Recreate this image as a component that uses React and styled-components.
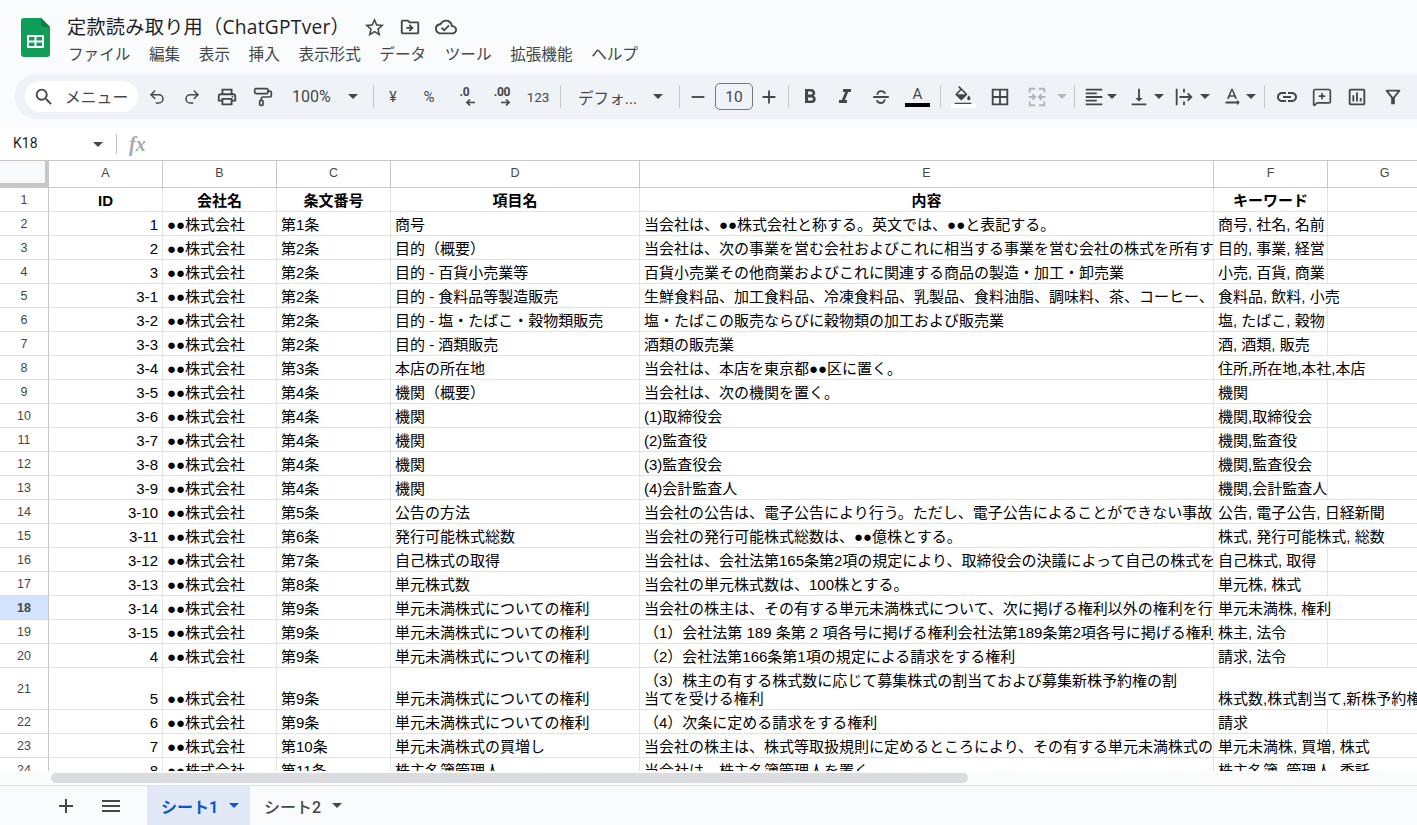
import React from "react";
import styled, { createGlobalStyle } from "styled-components";
import { MessageSquarePlus, PaintRoller, Redo2, Undo2 } from "lucide-react";
import {
  MdAdd,
  MdFormatAlignLeft,
  MdFormatBold,
  MdFormatColorFill,
  MdFormatItalic,
  MdLink,
  MdMenu,
  MdOutlineBorderAll,
  MdOutlineCloudDone,
  MdOutlineDriveFileMove,
  MdOutlineFilterAlt,
  MdOutlineInsertChart,
  MdOutlinePrint,
  MdRemove,
  MdSearch,
  MdStarBorder,
  MdTextRotationNone,
  MdVerticalAlignBottom,
} from "react-icons/md";

const UI_FONT = `Roboto, "Noto Sans CJK JP", sans-serif`;
const SHEET_FONT = `"Liberation Sans", "Noto Sans CJK JP", sans-serif`;
const ICON = "#444746";

const GlobalStyle = createGlobalStyle`
  html, body {
    margin: 0;
    padding: 0;
    overflow: hidden;
    background: #f9fbfd;
  }
`;

const Page = styled.div`
  width: 1417px;
  height: 825px;
  display: flex;
  flex-direction: column;
  overflow: hidden;
  background: #f9fbfd;
  color: #1f1f1f;
  font-family: ${UI_FONT};
`;

const Header = styled.header`
  height: 74px;
  flex: none;
  display: flex;
  padding-left: 21px;
  box-sizing: border-box;
`;

const LogoWrap = styled.div`
  width: 29px;
  padding-top: 18px;
  margin-right: 17px;
`;

const HeaderMain = styled.div`
  display: flex;
  flex-direction: column;
`;

const TitleRow = styled.div`
  display: flex;
  align-items: center;
  height: 28px;
  margin-top: 13px;
`;

const Title = styled.div`
  font-family: "Open Sans", "Noto Sans CJK JP", sans-serif;
  font-size: 19.2px;
  letter-spacing: 0.25px;
  line-height: 28px;
  width: 289px;
  white-space: nowrap;
`;

const TitleIcon = styled.span`
  width: 36px;
  display: flex;
  justify-content: center;
  color: ${ICON};
  font-size: ${(p) => p.$size || 22}px;
`;

const MenuBar = styled.nav`
  display: flex;
  gap: 18.6px;
  margin-top: 2px;
  padding-left: 1px;
  font-size: 15.6px;
  line-height: 24px;
  color: #444746;
`;

const Toolbar = styled.div`
  height: 45px;
  flex: none;
  margin-left: 15px;
  padding-left: 10px;
  display: flex;
  align-items: center;
  background: #eff3f8;
  border-radius: 23px 0 0 23px;
  color: ${ICON};
`;

const SearchPill = styled.div`
  width: 113px;
  height: 31px;
  flex: none;
  margin-right: 1px;
  box-sizing: border-box;
  padding-left: 8px;
  display: flex;
  align-items: center;
  gap: 10px;
  background: #fff;
  border-radius: 16px;
  font-size: 15.8px;
  white-space: nowrap;
  overflow: hidden;
  svg {
    font-size: 22px;
    flex: none;
  }
`;

const Tool = styled.div`
  width: ${(p) => p.$w || 35}px;
  flex: none;
  height: 30px;
  display: flex;
  align-items: center;
  justify-content: ${(p) => (p.$pad !== undefined ? "flex-start" : "center")};
  padding-left: ${(p) => p.$pad || 0}px;
  box-sizing: border-box;
  gap: ${(p) => p.$gap || 0}px;
  font-size: ${(p) => p.$font || 22}px;
  color: ${(p) => p.$color || ICON};
  white-space: nowrap;
`;

const Caret = styled.span`
  flex: none;
  width: 0;
  height: 0;
  border-left: 5px solid transparent;
  border-right: 5px solid transparent;
  border-top: 5px solid ${(p) => p.$color || ICON};
`;

const Sep = styled.div`
  width: 1px;
  height: 23px;
  flex: none;
  margin: 0 ${(p) => p.$mr}px 0 ${(p) => p.$ml}px;
  background: #c7c7c7;
`;

const SizeBox = styled.div`
  width: 38px;
  height: 27px;
  flex: none;
  box-sizing: border-box;
  border: 1px solid #747775;
  border-radius: 5px;
  display: flex;
  align-items: center;
  justify-content: center;
  font-size: 15.5px;
`;

const ColorStack = styled.div`
  display: flex;
  flex-direction: column;
  align-items: center;
  width: 26px;
`;

const ColorLetter = styled.span`
  font-size: 15px;
  line-height: 17px;
`;

const ColorBar = styled.span`
  width: 25px;
  height: 4px;
  background: ${(p) => p.$color};
  margin-top: ${(p) => p.$mt || 0}px;
`;

const DecStack = styled.div`
  display: flex;
  flex-direction: column;
  align-items: flex-end;
  font-size: 12px;
  font-weight: 700;
  line-height: 11px;
  letter-spacing: -0.3px;
  svg {
    margin-top: 1px;
    margin-right: ${(p) => p.$arrowOut || 0}px;
    display: block;
  }
`;

const FormulaBar = styled.div`
  height: 33px;
  flex: none;
  margin-top: 9px;
  display: flex;
  align-items: center;
  background: #fff;
  border-bottom: 1px solid #c7c7c7;
  box-sizing: border-box;
  padding-left: 13px;
`;

const NameBox = styled.div`
  width: 80px;
  font-size: 14px;
  padding-bottom: 2px;
  color: #1f1f1f;
`;

const FxSep = styled.div`
  width: 1px;
  height: 20px;
  margin: 0 12px 0 13px;
  background: #c7c7c7;
`;

const Fx = styled.span`
  font-family: "Liberation Serif", serif;
  font-style: italic;
  font-weight: 700;
  font-size: 20px;
  color: #a8abad;
`;

const GridArea = styled.div`
  height: 610px;
  flex: none;
  overflow: hidden;
  background: #fff;
`;

const Sheet = styled.table`
  width: 1442px;
  table-layout: fixed;
  border-collapse: separate;
  border-spacing: 0;
  font-family: ${SHEET_FONT};
`;

const ColHead = styled.th`
  height: 27px;
  padding: 0 0 2px;
  box-sizing: border-box;
  background: #fff;
  border-right: 1px solid #c7c7c7;
  border-bottom: 1px solid #c7c7c7;
  font-size: 12.5px;
  font-weight: 400;
  color: #444746;
`;

const Corner = styled.th`
  height: 27px;
  padding: 0;
  box-sizing: border-box;
  background: #f8f9fa;
  border-right: 4px solid #c7c7c7;
  border-bottom: 5px solid #c7c7c7;
`;

const RowHead = styled.td`
  height: ${(p) => p.$h}px;
  padding: 1px 0 0;
  box-sizing: border-box;
  text-align: center;
  background: ${(p) => (p.$active ? "#d3e3fd" : "#fff")};
  border-right: 1px solid #c7c7c7;
  border-bottom: 1px solid #dcdddd;
  font-size: 12.5px;
  font-weight: ${(p) => (p.$active ? 700 : 400)};
  color: #444746;
`;

const Cell = styled.td`
  height: ${(p) => p.$h}px;
  padding: 0 4px 1px;
  box-sizing: border-box;
  vertical-align: bottom;
  overflow: hidden;
  white-space: pre;
  text-align: ${(p) => p.$align || "left"};
  font-size: 15px;
  line-height: 18px;
  font-weight: ${(p) => (p.$bold ? 700 : 400)};
  color: #000;
  border-right: 1px solid #e2e3e3;
  border-bottom: 1px solid #e2e3e3;
`;

const ScrollTrack = styled.div`
  height: 15px;
  flex: none;
  box-sizing: border-box;
  padding: 2px 0 2px 51px;
  background: #fafbfb;
  border-bottom: 1px solid #e1e3e1;
`;

const ScrollThumb = styled.div`
  width: 917px;
  height: 10px;
  background: #dadce0;
  border-radius: 5px;
`;

const TabBar = styled.div`
  height: 39px;
  flex: none;
  display: flex;
  align-items: stretch;
  padding-left: 48px;
  color: ${ICON};
`;

const TabTool = styled.div`
  width: ${(p) => p.$w}px;
  flex: none;
  display: flex;
  align-items: center;
  justify-content: center;
  font-size: 24px;
`;

const Tab = styled.div`
  width: ${(p) => p.$w}px;
  flex: none;
  box-sizing: border-box;
  padding-left: 14px;
  display: flex;
  align-items: center;
  gap: 11px;
  font-size: 16px;
  font-weight: ${(p) => (p.$active ? 700 : 500)};
  color: ${(p) => (p.$active ? "#0b57d0" : "#444746")};
  background: ${(p) => (p.$active ? "#e1e9f7" : "transparent")};
`;

const COMPANY = "●●株式会社";
const UNIT = "単元未満株式についての権利";
const COLUMNS = ["A", "B", "C", "D", "E", "F", "G"];
const WIDTHS = [49, 114, 114, 114, 249, 574, 114, 114];

// id, 条文番号, 項目名, 内容, キーワード, overflow into G
const ROWS = [
  ["1", "第1条", "商号", "当会社は、●●株式会社と称する。英文では、●●と表記する。", "商号, 社名, 名前"],
  ["2", "第2条", "目的（概要）", "当会社は、次の事業を営む会社およびこれに相当する事業を営む会社の株式を所有することにより", "目的, 事業, 経営"],
  ["3", "第2条", "目的 - 百貨小売業等", "百貨小売業その他商業およびこれに関連する商品の製造・加工・卸売業", "小売, 百貨, 商業"],
  ["3-1", "第2条", "目的 - 食料品等製造販売", "生鮮食料品、加工食料品、冷凍食料品、乳製品、食料油脂、調味料、茶、コーヒー、", "食料品, 飲料, 小売", true],
  ["3-2", "第2条", "目的 - 塩・たばこ・穀物類販売", "塩・たばこの販売ならびに穀物類の加工および販売業", "塩, たばこ, 穀物"],
  ["3-3", "第2条", "目的 - 酒類販売", "酒類の販売業", "酒, 酒類, 販売"],
  ["3-4", "第3条", "本店の所在地", "当会社は、本店を東京都●●区に置く。", "住所,所在地,本社,本店", true],
  ["3-5", "第4条", "機関（概要）", "当会社は、次の機関を置く。", "機関"],
  ["3-6", "第4条", "機関", "(1)取締役会", "機関,取締役会"],
  ["3-7", "第4条", "機関", "(2)監査役", "機関,監査役"],
  ["3-8", "第4条", "機関", "(3)監査役会", "機関,監査役会"],
  ["3-9", "第4条", "機関", "(4)会計監査人", "機関,会計監査人"],
  ["3-10", "第5条", "公告の方法", "当会社の公告は、電子公告により行う。ただし、電子公告によることができない事故", "公告, 電子公告, 日経新聞", true],
  ["3-11", "第6条", "発行可能株式総数", "当会社の発行可能株式総数は、●●億株とする。", "株式, 発行可能株式, 総数", true],
  ["3-12", "第7条", "自己株式の取得", "当会社は、会社法第165条第2項の規定により、取締役会の決議によって自己の株式を", "自己株式, 取得"],
  ["3-13", "第8条", "単元株式数", "当会社の単元株式数は、100株とする。", "単元株, 株式"],
  ["3-14", "第9条", UNIT, "当会社の株主は、その有する単元未満株式について、次に掲げる権利以外の権利を行", "単元未満株, 権利", true],
  ["3-15", "第9条", UNIT, "（1）会社法第 189 条第 2 項各号に掲げる権利会社法第189条第2項各号に掲げる権利", "株主, 法令"],
  ["4", "第9条", UNIT, "（2）会社法第166条第1項の規定による請求をする権利", "請求, 法令"],
  ["5", "第9条", UNIT, "（3）株主の有する株式数に応じて募集株式の割当ておよび募集新株予約権の割\n当てを受ける権利", "株式数,株式割当て,新株予約権", true],
  ["6", "第9条", UNIT, "（4）次条に定める請求をする権利", "請求"],
  ["7", "第10条", "単元未満株式の買増し", "当会社の株主は、株式等取扱規則に定めるところにより、その有する単元未満株式の", "単元未満株, 買増, 株式", true],
  ["8", "第11条", "株主名簿管理人", "当会社は、株主名簿管理人を置く。", "株主名簿, 管理人, 委託", true],
];

const HEADINGS = ["ID", "会社名", "条文番号", "項目名", "内容", "キーワード"];

const SheetsLogo = () => (
  <svg width="29" height="39" viewBox="0 0 29 39">
    <path d="M3 0h17l9 9v27a3 3 0 0 1-3 3H3a3 3 0 0 1-3-3V3a3 3 0 0 1 3-3z" fill="#0f9d58" />
    <path d="M20 0l9 9h-6.500a2.500 2.500 0 0 1-2.500-2.500z" fill="#0b7d45" />
    <path d="M6 17h17v13H6z" fill="#fff" />
    <path d="M8 19h5.500v3.500H8zM15.500 19H21v3.500h-5.500zM8 24.500h5.500V28H8zM15.500 24.500H21V28h-5.500z" fill="#0f9d58" />
  </svg>
);

const StrikeIcon = () => (
  <svg width="22" height="22" viewBox="0 0 24 24" fill="none" stroke={ICON} strokeWidth="2">
    <path d="M3.500 12h17M8 9.500C8 7 10 5.500 12 5.500s4 1 4.500 3M7.500 15.500c.5 2 2.500 3 4.500 3s4-1.500 4-4" />
  </svg>
);

const MergeIcon = () => (
  <svg width="22" height="22" viewBox="0 0 24 24" fill="none" stroke="#b4b7ba" strokeWidth="2">
    <path d="M10 3H4v4M4 17v4h6M14 3h6v4M20 17v4h-6" />
    <path d="M3 12h6M7 9l3 3-3 3M21 12h-6M17 9l-3 3 3 3" />
  </svg>
);

const WrapIcon = () => (
  <svg width="22" height="22" viewBox="0 0 24 24" fill="none" stroke={ICON} strokeWidth="2">
    <path d="M4 3v18M12 3v4M12 17v4M7 12h13M16 8l4 4-4 4" />
  </svg>
);

const ArrowLeft = () => (
  <svg width="9" height="7" viewBox="0 0 9 7" fill="none" stroke={ICON} strokeWidth="1.600">
    <path d="M9 3.500H1M4 .5l-3 3 3 3" />
  </svg>
);

const ArrowRight = () => (
  <svg width="9" height="7" viewBox="0 0 9 7" fill="none" stroke={ICON} strokeWidth="1.600">
    <path d="M0 3.500h8M5 .5l3 3-3 3" />
  </svg>
);

const App = () => {
  return (
    <Page>
      <GlobalStyle />
      <Header>
        <LogoWrap>
          <SheetsLogo />
        </LogoWrap>
        <HeaderMain>
          <TitleRow>
            <Title>定款読み取り用（ChatGPTver）</Title>
            <TitleIcon $size={23}><MdStarBorder /></TitleIcon>
            <TitleIcon><MdOutlineDriveFileMove /></TitleIcon>
            <TitleIcon><MdOutlineCloudDone /></TitleIcon>
          </TitleRow>
          <MenuBar>
            {["ファイル", "編集", "表示", "挿入", "表示形式", "データ", "ツール", "拡張機能", "ヘルプ"].map((m) => (
              <span key={m}>{m}</span>
            ))}
          </MenuBar>
        </HeaderMain>
      </Header>

      <Toolbar>
        <SearchPill><MdSearch />メニュー</SearchPill>
        <Tool><Undo2 size={18} strokeWidth={2} /></Tool>
        <Tool><Redo2 size={18} strokeWidth={2} /></Tool>
        <Tool $w={36}><MdOutlinePrint /></Tool>
        <Tool $w={36}><PaintRoller size={20} strokeWidth={2} /></Tool>
        <Tool $w={84} $font={16} $pad={11} $gap={17}>100%<Caret /></Tool>
        <Sep $ml={8} $mr={6} />
        <Tool $w={26} $font={14}>¥</Tool>
        <Tool $w={46} $font={15}>%</Tool>
        <Tool $w={25}>
          <DecStack $arrowOut={-6}>.0<ArrowLeft /></DecStack>
        </Tool>
        <Tool $w={50}>
          <DecStack>.00<ArrowRight /></DecStack>
        </Tool>
        <Tool $w={22} $font={13.5}>123</Tool>
        <Sep $ml={11} $mr={7} />
        <Tool $w={104} $font={15.6} $pad={10} $gap={16}>デフォ...<Caret /></Tool>
        <Sep $ml={7} $mr={0} />
        <Tool $w={35}><MdRemove /></Tool>
        <SizeBox>10</SizeBox>
        <Tool $w={31}><MdAdd /></Tool>
        <Sep $ml={4} $mr={3} />
        <Tool $font={24}><MdFormatBold /></Tool>
        <Tool $font={24}><MdFormatItalic /></Tool>
        <Tool $w={37}><StrikeIcon /></Tool>
        <Tool $w={37}>
          <ColorStack>
            <ColorLetter>A</ColorLetter>
            <ColorBar $color="#000" />
          </ColorStack>
        </Tool>
        <Sep $ml={4} $mr={4} />
        <Tool $w={36}>
          <ColorStack>
            <MdFormatColorFill size={20} />
            <ColorBar $color="#fff" $mt={-2} />
          </ColorStack>
        </Tool>
        <Tool $w={38}><MdOutlineBorderAll /></Tool>
        <Tool $w={36}><MergeIcon /></Tool>
        <Tool $w={14}><Caret $color="#b4b7ba" /></Tool>
        <Sep $ml={5} $mr={4} />
        <Tool $w={42} $pad={4} $gap={2}><MdFormatAlignLeft /><Caret /></Tool>
        <Tool $w={49} $pad={6.5} $gap={4}><MdVerticalAlignBottom /><Caret /></Tool>
        <Tool $w={42} $pad={2.5} $gap={5}><WrapIcon /><Caret /></Tool>
        <Tool $w={44} $pad={8.5} $gap={3}><MdTextRotationNone /><Caret /></Tool>
        <Sep $ml={8} $mr={4} />
        <Tool $font={24}><MdLink /></Tool>
        <Tool><MessageSquarePlus size={20} strokeWidth={2} /></Tool>
        <Tool $w={36}><MdOutlineInsertChart /></Tool>
        <Tool $w={36}><MdOutlineFilterAlt /></Tool>
      </Toolbar>

      <FormulaBar>
        <NameBox>K18</NameBox>
        <Caret />
        <FxSep />
        <Fx>fx</Fx>
      </FormulaBar>

      <GridArea>
        <Sheet>
          <colgroup>
            {WIDTHS.map((w, i) => (
              <col key={i} style={{ width: w }} />
            ))}
          </colgroup>
          <thead>
            <tr>
              <Corner />
              {COLUMNS.map((c) => (
                <ColHead key={c}>{c}</ColHead>
              ))}
            </tr>
          </thead>
          <tbody>
            <tr>
              <RowHead $h={24}>1</RowHead>
              {HEADINGS.map((h) => (
                <Cell key={h} $h={24} $bold $align="center">{h}</Cell>
              ))}
              <Cell $h={24} />
            </tr>
            {ROWS.map((row, i) => {
              const n = i + 2;
              const h = n === 21 ? 42 : 24;
              const [id, article, item, content, keyword, wide] = row;
              return (
                <tr key={n}>
                  <RowHead $h={h} $active={n === 18}>{n}</RowHead>
                  <Cell $h={h} $align="right">{id}</Cell>
                  <Cell $h={h}>{COMPANY}</Cell>
                  <Cell $h={h}>{article}</Cell>
                  <Cell $h={h}>{item}</Cell>
                  <Cell $h={h}>{content}</Cell>
                  <Cell $h={h} colSpan={wide ? 2 : 1}>{keyword}</Cell>
                  {!wide && <Cell $h={h} />}
                </tr>
              );
            })}
          </tbody>
        </Sheet>
      </GridArea>

      <ScrollTrack>
        <ScrollThumb />
      </ScrollTrack>

      <TabBar>
        <TabTool $w={36}><MdAdd /></TabTool>
        <TabTool $w={54}><MdMenu /></TabTool>
        <TabTool $w={9} />
        <Tab $w={103} $active>シート1<Caret $color="#0b57d0" /></Tab>
        <Tab $w={110}>シート2<Caret /></Tab>
      </TabBar>
    </Page>
  );
};

export default App;
